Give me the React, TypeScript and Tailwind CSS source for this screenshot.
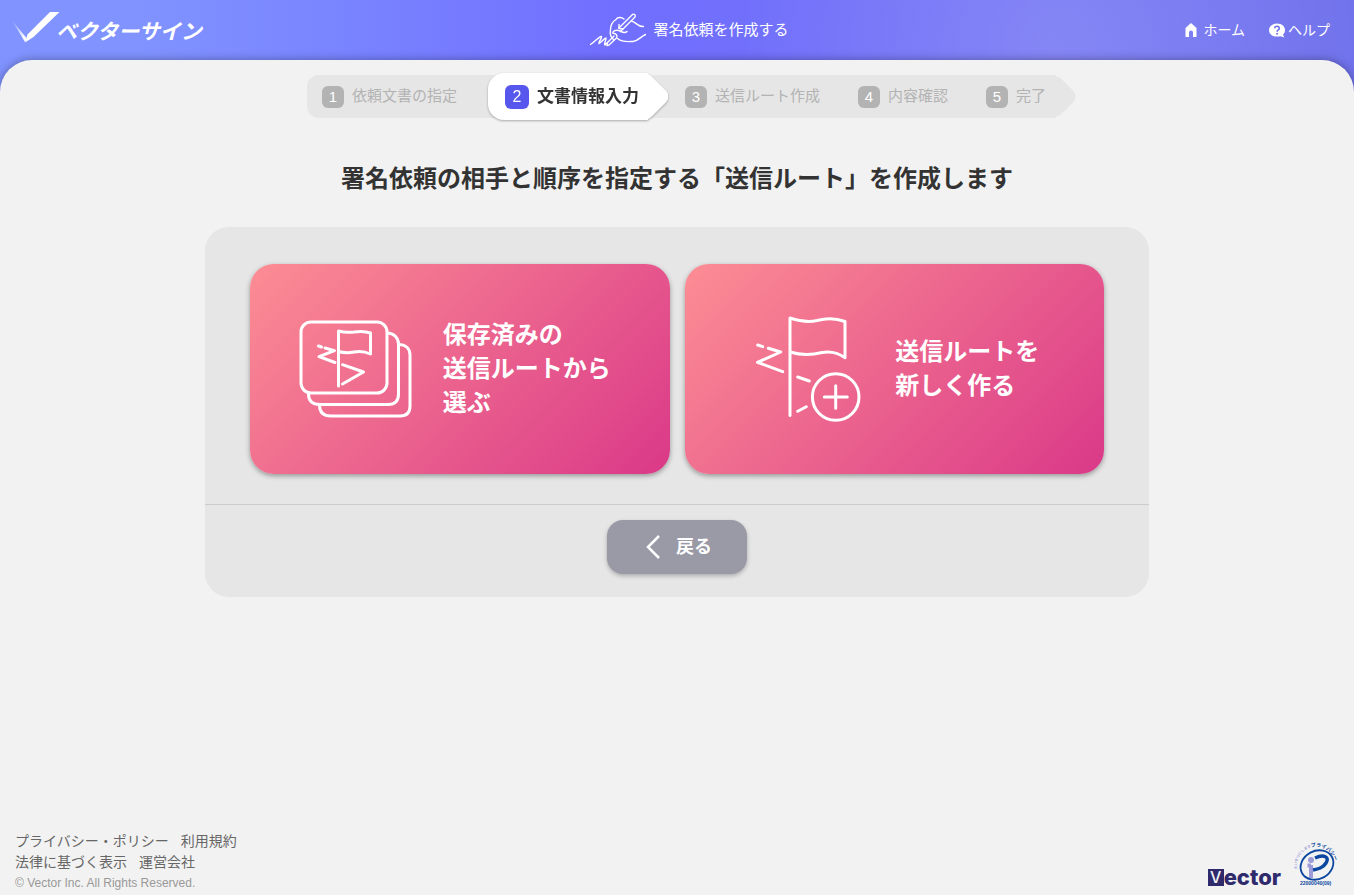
import type { ReactNode } from "react";

interface Step {
  no: number;
  label: string;
  active?: boolean;
}

const STEPS: Step[] = [
  { no: 1, label: "依頼文書の指定" },
  { no: 2, label: "文書情報入力", active: true },
  { no: 3, label: "送信ルート作成" },
  { no: 4, label: "内容確認" },
  { no: 5, label: "完了" },
];

function CheckMark() {
  return (
    <svg width="48" height="36" viewBox="0 0 48 36" aria-hidden="true">
      <defs>
        <linearGradient id="tick" x1="0" y1="0" x2="0.6" y2="1">
          <stop offset="0" stopColor="#fff" stopOpacity="0.1" />
          <stop offset="1" stopColor="#fff" />
        </linearGradient>
      </defs>
      <path d="M0 8.500 L13 30 L14.500 26 Z" fill="url(#tick)" />
      <path d="M13 30.500 L15.500 22.500 L38 0 H47.500 L21.500 25 Z" fill="#fff" />
    </svg>
  );
}

function WritingHand() {
  return (
    <svg
      width="60"
      height="36"
      viewBox="0 0 60 36"
      fill="none"
      stroke="#fff"
      strokeWidth="1.4"
      strokeLinecap="round"
      strokeLinejoin="round"
      aria-hidden="true"
    >
      <path d="M1.500 32.500 C6 30 9 25 12.500 24.500 C13.500 26 9 30 10 31.500 C12 31 14.500 26.500 17 26 C17.500 28 14.500 31 16 33 L18.500 30.500" />
      <path d="M30 16 L43.500 2.500 C45.500 1.500 47 3 46 5 L31.500 19.500" />
      <path d="M30 12.500 V16.500 L34 17" />
      <path d="M35 7 C32 4.500 28 5.500 27 7.500 C23 10 21.500 14 21.500 18 C20.500 23 22 25.500 24.500 27.500" />
      <path d="M24 20 C26 17.500 30 18.500 32 19.500 C35 21 37 20.500 38 19.500" />
      <path d="M23.500 21 C27 21.500 29 23 27.500 26 L20 33 L18 33.500 L18.500 30.500 L25 24" />
      <path d="M42.500 9 C47 10 48.500 15 54.500 14.500" />
      <path d="M28.500 26.500 C33 30.500 39 29.500 44 29.500 C50 28.500 51 25 56.500 22.500" />
    </svg>
  );
}

function HomeIcon() {
  return (
    <svg width="12" height="14" viewBox="0 0 12 14" fill="#fff" aria-hidden="true">
      <path d="M6 0 L11.500 5 V14 H8 V9.500 A2 2 0 0 0 4 9.500 V14 H0.500 V5 Z" />
    </svg>
  );
}

function HelpIcon() {
  return (
    <svg width="17" height="15" viewBox="0 0 17 15" aria-hidden="true">
      <path
        d="M8 0.500 C12.500 0.500 16 3.300 16 7 C16 9 15.200 10.600 14 11.700 L15.300 14.500 L11.500 13.200 C6 14.600 0 12.400 0 7 C0 3.300 3.600 0.500 8 0.500 Z"
        fill="#fff"
      />
      <path
        d="M5.700 5.300 C5.900 2.600 10.500 2.700 10.300 5.400 C10.200 7 8.100 6.900 8.100 8.700"
        fill="none"
        stroke="#6f70ea"
        strokeWidth="1.600"
      />
      <circle cx="8.100" cy="10.800" r="1" fill="#6f70ea" />
    </svg>
  );
}

function SavedRoutesIcon() {
  return (
    <svg
      width="114"
      height="100"
      viewBox="0 0 114 100"
      fill="none"
      stroke="#fff"
      strokeWidth="3"
      strokeLinecap="round"
      strokeLinejoin="round"
      aria-hidden="true"
    >
      <rect x="2" y="3" width="86" height="71" rx="10" />
      <path d="M88 14 C95 14 99.500 19 99.500 25 V75 Q99.500 85.500 89 85.500 H21 Q9.500 85.500 9.500 75" strokeLinecap="butt" />
      <path d="M99.500 25.500 C106 25.500 111 29 111 36 V87 Q111 97 101 97 H32 Q20.500 97 20.500 86" strokeLinecap="butt" />
      <path d="M39.500 67 V12 C47 14 51 13.500 55 13 C61 12 66 12 71.500 14 V35 C65 32 60 32 55 33 C50 34 45 34 39.500 32.500" />
      <path d="M19.500 27 L22.500 28" />
      <path d="M26 29 L35.500 31.700 L20 37.700 L36 43.500" />
      <path d="M43.500 45.700 L64.500 53 L43.500 65" />
    </svg>
  );
}

function NewRouteIcon() {
  return (
    <svg
      width="106"
      height="108"
      viewBox="0 0 106 108"
      fill="none"
      stroke="#fff"
      strokeWidth="3"
      strokeLinecap="round"
      strokeLinejoin="round"
      aria-hidden="true"
    >
      <path d="M35 100.500 V3 C44 6 53 7.500 62 5.500 C71 3 81 3 90 6.500 V42.700 C82 37 75 36 67 37.500 C57 40 45 40 35 37" />
      <path d="M2.700 30 L7.700 31.700" />
      <path d="M13.300 33.300 L25.700 37 L2.500 47.300 L27.700 56.700" />
      <path d="M42.700 62 L54.300 66" />
      <path d="M42.700 96.300 L51.300 91.700" />
      <circle cx="80.700" cy="82" r="23.300" />
      <path d="M69.300 82 H92.300 M80.700 70.700 V93.300" />
    </svg>
  );
}

function PrivacyMark() {
  return (
    <svg
      width="46"
      height="46"
      viewBox="0 0 46 46"
      className="overflow-visible"
      role="img"
      aria-label="プライバシーマーク"
    >
      <defs>
        <path id="mark-arc" d="M4 27 A19 19 0 0 1 42 21" />
      </defs>
      <ellipse cx="24" cy="23" rx="17" ry="14" transform="rotate(-28 24 23)" fill="none" stroke="#0b46a0" strokeWidth="1.800" />
      <circle cx="18" cy="18" r="3" fill="#9d9bd8" />
      <path d="M18 23 V36 M14.500 23.500 H18" stroke="#9d9bd8" strokeWidth="4" fill="none" />
      <path d="M22 16 C31 12 37 15 33 21 C30 26 25 27 20 28" fill="none" stroke="#0b46a0" strokeWidth="3.500" />
      <text fontSize="3.500" fill="#9d9bd8" fontWeight="700">
        <textPath href="#mark-arc">
          たいせつにします
          <tspan fontSize="5" fill="#0b46a0">
            プライバシー
          </tspan>
        </textPath>
      </text>
      <text x="7" y="43" fontSize="5" fill="#0b46a0" fontWeight="700">
        22000040(09)
      </text>
    </svg>
  );
}

function StepItem({ step }: { step: Step }) {
  if (step.active) {
    return (
      <li
        aria-current="step"
        className="relative mr-[37px] ml-[31px] h-[47px] drop-shadow-[0_1px_1px_rgba(0,0,0,0.3)]"
      >
        <span className="absolute inset-y-0 -right-5 w-10 overflow-hidden">
          <span className="absolute top-[5px] right-1 size-[37px] rotate-45 rounded-lg bg-white" />
        </span>
        <span className="relative flex h-full items-center gap-2 rounded-l-2xl bg-white pr-[9px] pl-[17px] text-[17px] font-bold text-[#333]">
          <span className="grid size-6 place-items-center rounded-md bg-[#5757ee] text-base font-normal text-white">
            {step.no}
          </span>
          {step.label}
        </span>
      </li>
    );
  }
  return (
    <li className="flex items-center gap-2 text-[15px] text-[#b3b3b3]">
      <span className="grid size-[22px] place-items-center rounded-md bg-[#b3b3b3] text-[15px] text-white">
        {step.no}
      </span>
      {step.label}
    </li>
  );
}

function RouteButton({
  icon,
  lines,
  className,
}: {
  icon: ReactNode;
  lines: string[];
  className: string;
}) {
  return (
    <button
      type="button"
      className={`flex h-[210px] items-center justify-center rounded-3xl bg-linear-[135deg] from-[#fc8d94] to-[#da3988] text-left text-2xl leading-[34px] font-bold text-white shadow-[0_2px_5px_rgba(0,0,0,0.35)] ${className}`}
    >
      {icon}
      <span>
        {lines.map((line) => (
          <span key={line} className="block">
            {line}
          </span>
        ))}
      </span>
    </button>
  );
}

export default function App() {
  return (
    <div className="flex min-h-screen flex-col bg-linear-to-r from-[#8093ff] from-10% via-[#716fff] via-45% to-[#7072ec] font-['Liberation_Sans','Noto_Sans_CJK_JP',sans-serif]">
      <header className="grid h-[60px] grid-cols-3 items-center bg-[radial-gradient(circle_at_78%_80%,rgba(255,255,255,0.15),transparent_30%)] text-white">
        <a href="#" className="flex items-center pl-3 whitespace-nowrap">
          <CheckMark />
          <span className="-ml-1 pt-1 text-[21px] leading-6 font-bold italic">ベクターサイン</span>
        </a>
        <div className="flex items-center justify-center gap-1 pl-6 text-[15px] whitespace-nowrap">
          <WritingHand />
          署名依頼を作成する
        </div>
        <nav className="flex justify-end gap-6 pr-6 text-sm">
          <a href="#" className="flex items-center gap-[6px]">
            <HomeIcon />
            ホーム
          </a>
          <a href="#" className="flex items-center gap-[2px]">
            <HelpIcon />
            ヘルプ
          </a>
        </nav>
      </header>

      <div className="flex flex-1 flex-col rounded-t-[32px] bg-[#f2f2f2] shadow-[0_0_10px_rgba(0,0,0,0.35)]">
        <main className="flex flex-col items-center px-4 pt-[15px]">
          <nav className="relative ml-[9px]">
            <span className="absolute inset-y-0 -right-5 w-10 overflow-hidden">
              <span className="absolute top-[5px] right-1 size-[33px] rotate-45 rounded-lg bg-[#e6e6e6]" />
            </span>
            <ol className="relative flex h-[43px] items-center rounded-l-xl bg-[#e6e6e6] pr-[10px] pl-[15px] whitespace-nowrap [&>li+li:nth-child(n+4)]:ml-[38px]">
              {STEPS.map((step) => (
                <StepItem key={step.no} step={step} />
              ))}
            </ol>
          </nav>

          <h1 className="mt-[45px] text-2xl leading-8 font-bold text-[#333]">
            署名依頼の相手と順序を指定する「送信ルート」を作成します
          </h1>

          <section className="mt-8 w-full max-w-[944px] rounded-3xl bg-[#e6e6e6]">
            <div className="grid grid-cols-2 gap-[15px] px-[45px] pt-[37px] pb-[30px]">
              <RouteButton
                icon={<SavedRoutesIcon />}
                lines={["保存済みの", "送信ルートから", "選ぶ"]}
                className="gap-[30px] pr-[10px]"
              />
              <RouteButton
                icon={<NewRouteIcon />}
                lines={["送信ルートを", "新しく作る"]}
                className="gap-[34px] pl-[6px]"
              />
            </div>
            <div className="flex justify-center border-t border-[#ccc] pt-[15px] pb-[23px]">
              <button
                type="button"
                className="flex h-[54px] w-[140px] items-center justify-center gap-4 rounded-2xl bg-[#9a99a6] pl-1 text-lg font-bold text-white shadow-[0_2px_4px_rgba(0,0,0,0.25)]"
              >
                <svg width="14" height="24" viewBox="0 0 14 24" fill="none" stroke="#fff" strokeWidth="2.500" aria-hidden="true">
                  <path d="M13 1 L2 12 L13 23" />
                </svg>
                戻る
              </button>
            </div>
          </section>
        </main>

        <footer className="mt-auto flex items-end justify-between px-[15px] pb-px text-sm leading-[21px] text-[#666]">
          <div>
            <div className="flex gap-3">
              <a href="#">プライバシー・ポリシー</a>
              <a href="#">利用規約</a>
            </div>
            <div className="flex gap-3">
              <a href="#">法律に基づく表示</a>
              <a href="#">運営会社</a>
            </div>
            <small className="block text-xs leading-[21px] text-[#999]">
              © Vector Inc. All Rights Reserved.
            </small>
          </div>
          <div className="flex items-end gap-3 pb-[6px]">
            <a
              href="#"
              className="flex items-center font-['Inter',sans-serif] text-[22px] leading-[22px] font-extrabold text-[#2e2a6c]"
            >
              <span className="grid h-[17px] w-4 place-items-center bg-[#2e2a6c] text-base leading-4 font-medium text-[#f2f2f2]">
                V
              </span>
              ector
            </a>
            <a href="#">
              <PrivacyMark />
            </a>
          </div>
        </footer>
      </div>
    </div>
  );
}
